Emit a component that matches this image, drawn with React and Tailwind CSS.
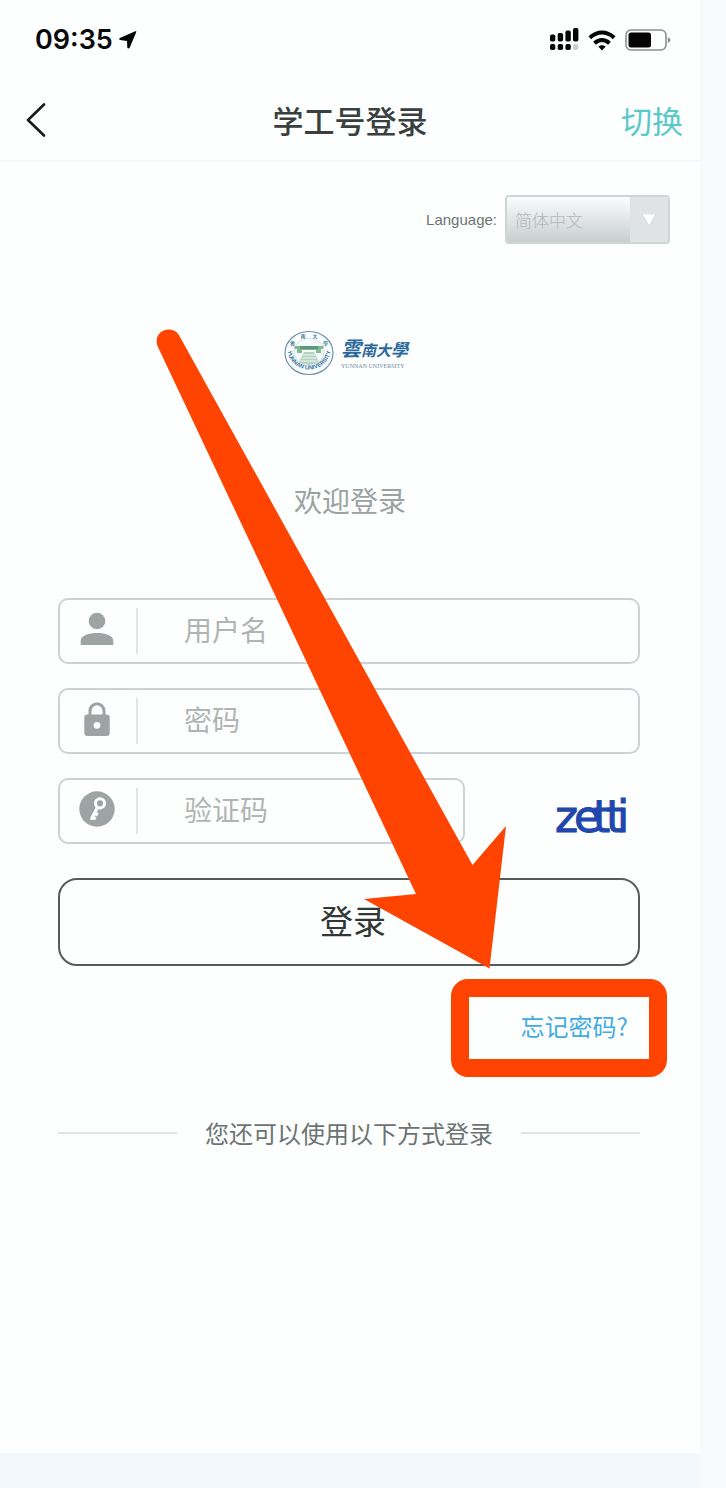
import React from "react";

function StatusBar() {
  return (
    <div className="flex h-20 items-center justify-between pl-[35px] pr-[29px]">
      <div className="flex items-center gap-1.5">
        <span className="font-['Inter',sans-serif] text-[27px] font-semibold leading-8 text-[#0a0a0a]">09:35</span>
        <svg className="h-[18px] w-[18px]" viewBox="0 0 18 18" fill="#050505" aria-hidden="true">
          <path d="M17.400.8 10.800 16.600Q9.600 18.200 8.300 16.800L8 9.900 1 9Q-.5 8 .9 6.900L16.200.3Q17.600-.1 17.400.8Z" />
        </svg>
      </div>
      <div className="flex items-center gap-[9px]">
        <svg className="h-[24px] w-[30px]" viewBox="0 0 30 24" fill="#050505" aria-hidden="true">
          <rect x="1" y="6.500" width="5.300" height="7" rx="1.800" />
          <rect x="8.700" y="5" width="5.400" height="8.500" rx="1.800" />
          <rect x="16.400" y="2.500" width="5.400" height="11" rx="1.800" />
          <rect x="24" y="0" width="5.400" height="13.500" rx="1.800" />
          <rect x="1" y="16" width="5.300" height="6" rx="1.800" />
          <rect x="8.700" y="16" width="5.400" height="6" rx="1.800" />
          <rect x="16.400" y="16" width="5.400" height="6" rx="1.800" />
          <rect x="24" y="16" width="5.400" height="6" rx="1.800" fill="#cfcfcf" />
        </svg>
        <svg className="h-[21px] w-7" viewBox="0 0 28 21" fill="none" stroke="#050505" strokeWidth="4" aria-hidden="true">
          <path d="M1.800 7.700Q7.500 2.600 14 2.600T26.200 7.700" />
          <path d="M6.500 13.200Q10 10 14 10T21.500 13.200" />
          <path d="M10.300 16.600Q14 14 17.700 16.600L14 20.600Z" fill="#050505" stroke="none" />
        </svg>
        <svg className="h-[22px] w-[46px]" viewBox="0 0 46 22" aria-hidden="true">
          <rect x="1" y="1" width="40" height="20" rx="5" fill="none" stroke="#8b908f" strokeWidth="1.600" />
          <rect x="3.500" y="3.500" width="22.500" height="15" rx="2.500" fill="#050505" />
          <path d="M42.800 8.200Q45.500 9 45.500 11T42.800 14Z" fill="#8b908f" />
        </svg>
      </div>
    </div>
  );
}

function Header() {
  return (
    <header className="grid h-[82px] grid-cols-3 items-center border-b-2 border-[#f4f6f9] px-[17px]">
      <button type="button" aria-label="返回" className="flex justify-self-start pl-[9px]">
        <svg className="h-[34px] w-5" viewBox="0 0 20 34" fill="none" stroke="#161b1b" strokeWidth="2.600" strokeLinecap="round" strokeLinejoin="round">
          <path d="M18 1.500 2 17 18 32.500" />
        </svg>
      </button>
      <h1 className="justify-self-center whitespace-nowrap text-[31px] font-medium leading-10 text-[#3a403f]">学工号登录</h1>
      <button type="button" className="justify-self-end text-[31px] leading-10 text-[#5bc9ca]">切换</button>
    </header>
  );
}

function LanguagePicker() {
  return (
    <div className="flex items-center justify-end gap-2 pr-[30px] pt-[33px]">
      <label htmlFor="language" className="font-['Liberation_Sans',sans-serif] text-[15px] leading-5 text-[#6c7473]">
        Language:
      </label>
      <div className="relative grid h-[49px] w-[165px] grid-cols-[1fr_38px] overflow-hidden rounded-[4px] border-2 border-[#cdd5d5] bg-[#dfe3e3]">
        <select
          id="language"
          className="col-span-2 col-start-1 row-start-1 h-full w-full appearance-none bg-linear-to-b from-[#fafdfd] to-[#c9cece] pl-2 text-[17px] font-light text-[#b3b9b9] outline-none"
        >
          <option>简体中文</option>
        </select>
        <span className="pointer-events-none z-10 col-start-2 row-start-1 flex items-center justify-center bg-[#dfe3e3]">
          <svg className="h-3 w-3.5" viewBox="0 0 14 12" fill="#fdffff" stroke="#c7cdcd" strokeWidth="0.500">
            <path d="M0 0H14L7 12Z" />
          </svg>
        </span>
      </div>
    </div>
  );
}

function Seal() {
  return (
    <svg className="h-[46px] w-[50px]" viewBox="0 0 50 46" aria-hidden="true">
      <defs>
        <path id="seal-bottom" d="M3.500 19A21.500 20.500 0 0 0 46.500 19" />
      </defs>
      <ellipse cx="25" cy="23" rx="24" ry="21.500" fill="#fbfefe" stroke="#6d91a8" strokeWidth="1.200" />
      <ellipse cx="25" cy="22" rx="15" ry="14" fill="#f5fbfa" stroke="#c9dde0" strokeWidth="0.800" />
      <path d="M10.500 16H39.500V19H37V23H32V20H18V23H13V19H10.500Z" fill="#86b795" />
      <path d="M16 16h18v3H16z" fill="#5b9878" />
      <path d="M20 22h10l5 10q-10 6-20 0Z" fill="#b5d3c3" />
      <path d="M19 25h12M18 28h14M16.500 31h17" stroke="#eff8f4" strokeWidth="1" />
      <g fill="#527f9f" fontSize="5" fontWeight="700" fontFamily="Noto Sans CJK TC, sans-serif" textAnchor="middle">
        <text x="8.500" y="15">雲</text>
        <text x="19" y="7.500">南</text>
        <text x="31" y="7.500">大</text>
        <text x="41.500" y="15">學</text>
      </g>
      <text fill="#3874a1" fontSize="5.800" fontWeight="700" fontFamily="Liberation Sans, sans-serif">
        <textPath href="#seal-bottom" startOffset="50%" textAnchor="middle">YUNNAN UNIVERSITY</textPath>
      </text>
    </svg>
  );
}

function Logo() {
  return (
    <div className="mt-[86px] flex items-center gap-[7px] pl-[284px]">
      <Seal />
      <div className="flex flex-col items-start text-[#2b689b]">
        <span className="font-['Noto_Sans_CJK_TC',sans-serif] text-[17px] font-bold italic leading-6">
          <span className="text-[20px]">雲</span>
          <span className="text-[15px]">南大</span>
          <span>學</span>
        </span>
        <span className="whitespace-nowrap font-['Liberation_Serif',serif] text-[6px] leading-2 text-[#6d8da1]">YUNNAN UNIVERSITY</span>
      </div>
    </div>
  );
}

function UserIcon() {
  return (
    <svg className="h-[34px] w-[34px]" viewBox="0 0 34 34" fill="#9da4a3">
      <circle cx="17" cy="9" r="8.300" />
      <path d="M.7 33v-4.500C.7 23.500 9 21 17 21s16.300 2.500 16.300 7.500V33Z" />
    </svg>
  );
}

function LockIcon() {
  return (
    <svg className="h-[34px] w-[34px]" viewBox="0 0 34 34">
      <path d="M10 14V9a7 7.300 0 0 1 14 0v5" fill="none" stroke="#9da4a3" strokeWidth="3" />
      <rect x="4.300" y="12.500" width="25.400" height="21.500" rx="3" fill="#9da4a3" />
      <circle cx="17" cy="23.300" r="3.400" fill="#fdfefe" />
    </svg>
  );
}

function KeyIcon() {
  return (
    <svg className="h-9 w-9" viewBox="0 0 36 36">
      <circle cx="18" cy="18" r="17.700" fill="#9da4a3" />
      <circle cx="21" cy="12.300" r="4.600" fill="none" stroke="#fdfefe" strokeWidth="3" />
      <path d="M18.500 16.500 12.500 28" stroke="#fdfefe" strokeWidth="3.400" />
      <path d="m15.500 20 4.200 2.500-1.600 2.700-4-2ZM13.500 24.200l4 2.200-1.300 2.600h-5.300Z" fill="#fdfefe" />
    </svg>
  );
}

function Field({ id, label, type = "text", icon }) {
  return (
    <div className="flex h-[66px] min-w-0 flex-1 items-center rounded-[10px] border-2 border-[#cdd2d5]">
      <label htmlFor={id} aria-label={label} className="flex h-[46px] w-[78px] shrink-0 items-center justify-center border-r-2 border-[#dfe5e8] pb-1 pr-0.5">
        {icon}
      </label>
      <input
        id={id}
        type={type}
        placeholder={label}
        className="h-full w-full min-w-0 bg-transparent pb-1 pl-[46px] text-[28px] text-[#59605f] outline-none placeholder:text-[#b0b5b4]"
      />
    </div>
  );
}

function Captcha() {
  return (
    <svg className="h-[65px] w-[84px]" viewBox="0 0 84 65" role="img" aria-label="zetti" fill="#2147ac" stroke="#2147ac" strokeWidth="1">
      <text x="3 22 41 54 65" y="53" fontSize="44" fontFamily="DejaVu Sans, sans-serif">zetti</text>
    </svg>
  );
}

function LoginForm() {
  return (
    <form className="mt-[78px] flex flex-col pl-[58px] pr-[60px]" onSubmit={(e) => e.preventDefault()}>
      <div className="flex flex-col gap-6">
        <div className="flex">
          <Field id="username" label="用户名" icon={<UserIcon />} />
        </div>
        <div className="flex">
          <Field id="password" label="密码" type="password" icon={<LockIcon />} />
        </div>
        <div className="flex items-center">
          <Field id="code" label="验证码" icon={<KeyIcon />} />
          <div className="flex w-[175px] shrink-0 justify-end pr-1">
            <Captcha />
          </div>
        </div>
      </div>
      <button type="submit" className="mt-[34px] h-[88px] rounded-[19px] border-2 border-[#565c5c] pb-1 pl-2 text-[33px] leading-10 text-[#303736]">
        登录
      </button>
      <div className="relative mt-[42px] flex justify-end pr-3">
        <a href="#forgot" className="text-2xl leading-9 text-[#42aae4]">忘记密码?</a>
        <div className="pointer-events-none absolute -right-[27px] -top-[29px] h-[98px] w-[216px] rounded-[17px] bg-[#ff4300] [clip-path:polygon(evenodd,0_0,100%_0,100%_100%,0_100%,0_0,18px_18px,198px_18px,198px_80px,18px_80px,18px_18px)]" />
      </div>
    </form>
  );
}

function Arrow() {
  return (
    <svg className="pointer-events-none absolute left-[156px] top-[329px] h-[640px] w-[351px]" viewBox="156 329 351 640" fill="#ff4300" aria-hidden="true">
      <path d="M157.500 346C152 330 174 323 180 337L472.500 865 506 826 489.500 968.500 364 899 416 894Z" />
    </svg>
  );
}

export default function App() {
  return (
    <div className="flex min-h-screen bg-[#f8f9fb] font-['Noto_Sans_CJK_SC',sans-serif]">
      <main className="relative flex min-w-0 flex-1 flex-col bg-[#fdfefe]">
        <StatusBar />
        <Header />
        <LanguagePicker />
        <Logo />
        <p className="mt-[104px] text-center text-[28px] leading-10 text-[#9ba2a1]">欢迎登录</p>
        <LoginForm />
        <div className="mt-[71px] flex items-center pl-[58px] pr-[60px]">
          <span className="h-0.5 flex-1 bg-[#dfe5e6]" />
          <span className="px-7 text-2xl leading-9 text-[#6c7372]">您还可以使用以下方式登录</span>
          <span className="h-0.5 flex-1 bg-[#dfe5e6]" />
        </div>
        <footer className="mt-auto h-[35px] bg-[#f3f8fd]" />
        <Arrow />
      </main>
      <aside className="w-[26px] shrink-0" />
    </div>
  );
}
